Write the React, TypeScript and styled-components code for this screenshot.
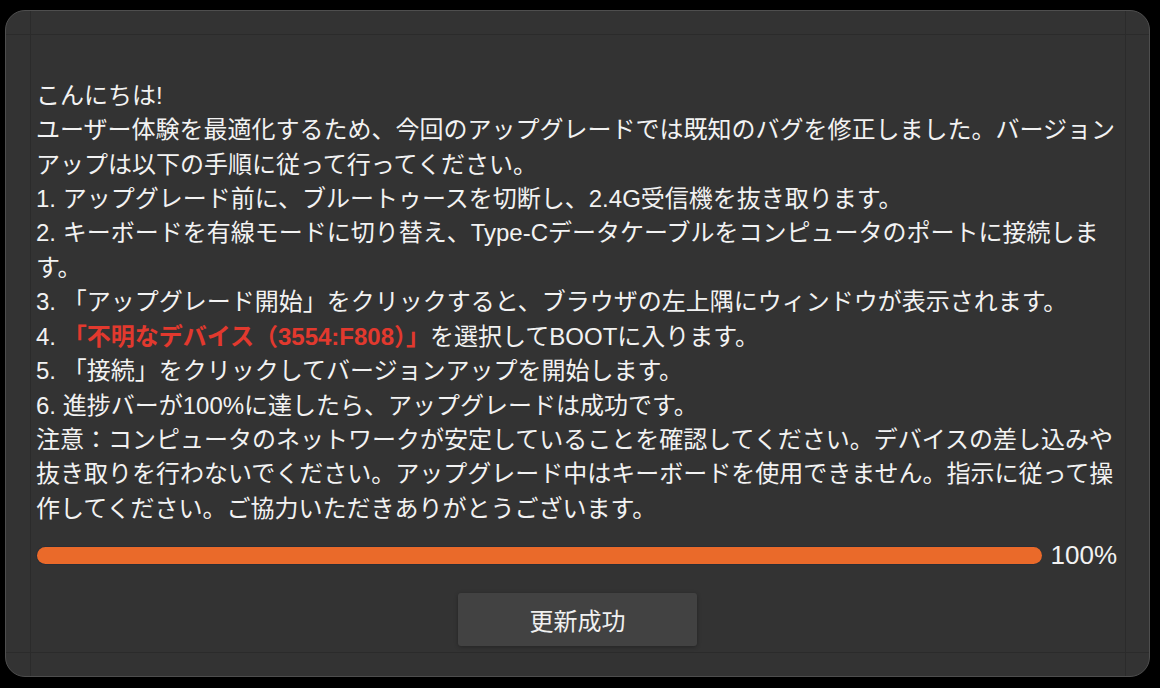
import styled, { createGlobalStyle } from "styled-components";

const GlobalStyle = createGlobalStyle`
  html, body {
    margin: 0;
    padding: 0;
    background: #000;
  }
  body {
    font-family: "Liberation Sans", "Noto Sans CJK JP", sans-serif;
  }
`;

const Page = styled.div`
  width: 1160px;
  height: 688px;
  padding: 10px 10px 0 5px;
  box-sizing: border-box;
`;

const Dialog = styled.div`
  position: relative;
  width: 1145px;
  height: 667px;
  box-sizing: border-box;
  background: #333333;
  border: 1px solid #4e4e4e;
  border-radius: 20px;
  display: flex;
  flex-direction: column;
  overflow: hidden;

  &::before {
    content: "";
    position: absolute;
    top: 0;
    bottom: 0;
    left: 24px;
    right: 23px;
    border-left: 1px solid #2b2b2b;
    border-right: 1px solid #2b2b2b;
    pointer-events: none;
  }
`;

const Header = styled.div`
  height: 24px;
  border-bottom: 1px solid #2b2b2b;
`;

const Body = styled.div`
  flex: 1;
  padding: 44px 0 6px 30px;
  display: flex;
  flex-direction: column;
`;

const Footer = styled.div`
  height: 24px;
  border-top: 1px solid #2b2b2b;
`;

const Message = styled.div`
  width: 1082px;
  color: #f2f2f2;
  font-size: 24px;
  line-height: 34.4px;
`;

const Line = styled.div``;

const Warn = styled.span`
  color: #e2392e;
  font-weight: bold;
`;

const ProgressRow = styled.div`
  margin-top: 17px;
  display: flex;
  align-items: center;
  gap: 8px;
  width: 1081px;
`;

const Track = styled.div`
  flex: 1;
  height: 19px;
  border-radius: 10px;
  background: #2a2e36;
  padding: 1px 0 1px 1px;
  box-sizing: border-box;
  display: flex;
`;

const Fill = styled.div`
  height: 17px;
  border-radius: 9px;
  background: #ea6a2a;
`;

const Percent = styled.span`
  color: #f2f2f2;
  font-size: 26px;
  line-height: 24px;
`;

const Actions = styled.div`
  margin-top: 26px;
  display: flex;
  justify-content: center;
  padding-right: 30px;
`;

const Button = styled.button`
  width: 239px;
  height: 53px;
  border: none;
  border-radius: 3px;
  background: #424242;
  color: #f0f0f0;
  font-family: "Liberation Sans", "Noto Sans CJK JP", sans-serif;
  font-size: 24px;
  box-shadow: 0 1px 4px rgba(0, 0, 0, 0.3);
  cursor: pointer;
`;

const progress = 100;

export default function App() {
  return (
    <Page>
      <GlobalStyle />
      <Dialog>
        <Header />
        <Body>
          <Message>
            <Line>こんにちは!</Line>
            <Line>
              ユーザー体験を最適化するため、今回のアップグレードでは既知のバグを修正しました。バージョンアップは以下の手順に従って行ってください。
            </Line>
            <Line>1. アップグレード前に、ブルートゥースを切断し、2.4G受信機を抜き取ります。</Line>
            <Line>
              2. キーボードを有線モードに切り替え、Type-Cデータケーブルをコンピュータのポートに接続します。
            </Line>
            <Line>3. 「アップグレード開始」をクリックすると、ブラウザの左上隅にウィンドウが表示されます。</Line>
            <Line>
              4. <Warn>「不明なデバイス（3554:F808）」</Warn>を選択してBOOTに入ります。
            </Line>
            <Line>5. 「接続」をクリックしてバージョンアップを開始します。</Line>
            <Line>6. 進捗バーが100%に達したら、アップグレードは成功です。</Line>
            <Line>
              注意：コンピュータのネットワークが安定していることを確認してください。デバイスの差し込みや抜き取りを行わないでください。アップグレード中はキーボードを使用できません。指示に従って操作してください。ご協力いただきありがとうございます。
            </Line>
          </Message>
          <ProgressRow>
            <Track>
              <Fill style={{ width: `${progress}%` }} />
            </Track>
            <Percent>{progress}%</Percent>
          </ProgressRow>
          <Actions>
            <Button>更新成功</Button>
          </Actions>
        </Body>
        <Footer />
      </Dialog>
    </Page>
  );
}
